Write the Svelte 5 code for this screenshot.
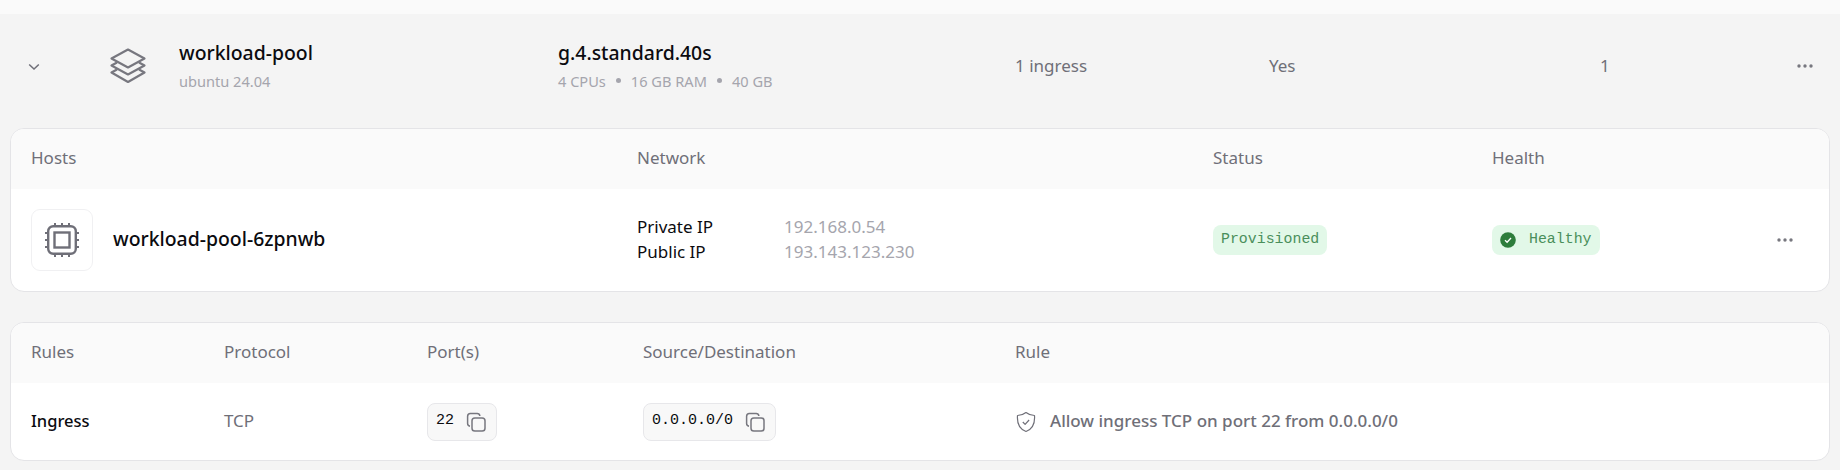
<script>
  const hosts = [
    { name: 'workload-pool-6zpnwb', privateIp: '192.168.0.54', publicIp: '193.143.123.230', status: 'Provisioned', health: 'Healthy' }
  ];
  const rules = [
    { type: 'Ingress', protocol: 'TCP', port: '22', source: '0.0.0.0/0', text: 'Allow ingress TCP on port 22 from 0.0.0.0/0' }
  ];
</script>

{#snippet dots()}
  <svg class="dots" width="16" height="4" viewBox="0 0 16 4"><circle cx="2" cy="2" r="1.7" /><circle cx="8" cy="2" r="1.7" /><circle cx="14" cy="2" r="1.7" /></svg>
{/snippet}

{#snippet copyIcon()}
  <svg class="copy" width="20" height="20" viewBox="0 0 20 20" fill="none" stroke="#77777f" stroke-width="1.5">
    <path d="M4 14.2C2.6 14 1.6 13 1.6 11.5V4.4C1.6 2.8 2.8 1.6 4.4 1.6h6.8c1.4 0 2.5 1 2.7 2.4" />
    <rect x="6" y="6" width="13" height="13" rx="2.8" />
  </svg>
{/snippet}

<div class="page">
  <div class="strip"></div>
  <div class="panel">
    <div class="pool">
      <svg class="chevron" width="12" height="8" viewBox="0 0 12 8" fill="none" stroke="#6f6f78" stroke-width="1.5"><path d="M1.2 1.5 6 6l4.8-4.5" /></svg>
      <svg class="stack" width="36" height="36" viewBox="0 0 36 36" fill="none" stroke="#77777f" stroke-width="2.2" stroke-linejoin="round">
        <path d="M18 1.5 34.500 10.500 18 19.500 1.500 10.500Z" />
        <path d="M7 14.500 1.500 17.500 18 26.500 34.500 17.500 29 14.500" />
        <path d="M7 21.500 1.500 24.500 18 34 34.500 24.500 29 21.500" />
      </svg>
      <div class="stacked">
        <div class="title">workload-pool</div>
        <div class="sub">ubuntu 24.04</div>
      </div>
      <div class="stacked">
        <div class="title">g.4.standard.40s</div>
        <div class="sub specs"><span>4 CPUs</span><i></i><span>16 GB RAM</span><i></i><span>40 GB</span></div>
      </div>
      <div class="cell">1 ingress</div>
      <div class="cell">Yes</div>
      <div class="cell">1</div>
      {@render dots()}
    </div>

    <div class="card">
      <div class="head hosts-grid">
        <span>Hosts</span><span>Network</span><span>Status</span><span>Health</span>
      </div>
      {#each hosts as host}
        <div class="host hosts-grid">
          <div class="host-name">
            <div class="chip">
              <svg width="34" height="34" viewBox="0 0 34 34" fill="none" stroke="#6f6f78">
                <rect x="3.2" y="3.2" width="27.6" height="27.6" rx="5" stroke-width="2.4" />
                <rect x="9.5" y="9.5" width="15" height="15" stroke-width="2.4" />
                <path stroke-width="2" d="M10 0v3M17 0v3M24 0v3M10 31v3M17 31v3M24 31v3M0 10h3M0 17h3M0 24h3M31 10h3M31 17h3M31 24h3" />
              </svg>
            </div>
            <span class="host-label">{host.name}</span>
          </div>
          <div class="ips">
            <span class="ip-label">Private IP</span><span class="ip">{host.privateIp}</span>
            <span class="ip-label">Public IP</span><span class="ip">{host.publicIp}</span>
          </div>
          <div><span class="badge"><span class="lift">{host.status}</span></span></div>
          <div class="health-cell">
            <span class="badge">
              <svg width="16" height="16" viewBox="0 0 16 16"><circle cx="8" cy="8" r="7.8" fill="#2e7d3c" /><path d="M5 8.200l2.100 2.100L11 6" fill="none" stroke="#fff" stroke-width="1.3" /></svg>
              <span class="lift">{host.health}</span>
            </span>
            {@render dots()}
          </div>
        </div>
      {/each}
    </div>

    <div class="card rules-card">
      <div class="head rules-grid">
        <span>Rules</span><span>Protocol</span><span>Port(s)</span><span>Source/Destination</span><span>Rule</span>
      </div>
      {#each rules as rule}
        <div class="rule rules-grid">
          <span class="rule-type lift">{rule.type}</span>
          <span class="muted lift">{rule.protocol}</span>
          <div><span class="code"><span class="code-text">{rule.port}</span>{@render copyIcon()}</span></div>
          <div><span class="code"><span class="code-text">{rule.source}</span>{@render copyIcon()}</span></div>
          <div class="rule-text">
            <svg width="22" height="22" viewBox="0 0 22 22" fill="none" stroke="#6f6f78" stroke-width="1.2" stroke-linejoin="round">
              <path d="M11 1.500C13.500 3.500 16.500 4.500 19.500 4.500c.5 6.500-.5 13-8.500 16C3 17.500 2 11 2.500 4.500 5.500 4.500 8.500 3.500 11 1.500Z" />
              <path d="M7.800 11l2.300 2.300 4-4.300" />
            </svg>
            <span class="lift">{rule.text}</span>
          </div>
        </div>
      {/each}
    </div>
  </div>
</div>

<style>
:global(body) {
  margin: 0;
  background: #f4f4f4;
}
.page {
  width: 1840px;
  height: 470px;
  overflow: hidden;
  font-family: "Noto Sans", sans-serif;
  font-size: 17px;
  color: #0b0b0f;
}
.strip {
  height: 14px;
  background: #fafafa;
}
.panel {
  background: #f4f4f4;
  padding: 0 10px;
}
.pool {
  display: grid;
  grid-template-columns: 82px 69px 379px 457px 254px 331px 1fr auto;
  align-items: center;
  box-sizing: border-box;
  height: 114px;
  margin: 0 -10px;
  padding: 0 27px 11px 28px;
}
.pool .cell {
  color: #6f6f78;
  margin-top: -1px;
}
.chevron {
  margin-top: 3px;
}
.stack {
  margin-top: 1px;
}
.stacked {
  display: flex;
  flex-direction: column;
  gap: 6px;
}
.title {
  font-size: 19.4px;
  font-weight: 500;
  line-height: 24px;
}
.sub {
  font-size: 14.6px;
  line-height: 20px;
  color: #a5a5ad;
}
.specs {
  display: flex;
  align-items: center;
  gap: 10px;
}
.specs i {
  width: 5px;
  height: 5px;
  border-radius: 50%;
  background: #a5a5ad;
}
.dots {
  fill: #77777f;
}
.card {
  background: #fff;
  border: 1px solid #e4e4e7;
  border-radius: 14px;
  overflow: hidden;
}
.rules-card {
  margin-top: 30px;
}
.head {
  box-sizing: border-box;
  background: #fafafa;
  height: 60px;
  padding-bottom: 3px;
  color: #6f6f78;
}
.hosts-grid {
  display: grid;
  grid-template-columns: 606px 576px 279px 1fr;
  padding-left: 20px;
  padding-right: 36px;
  align-items: center;
}
.rules-grid {
  display: grid;
  grid-template-columns: 193px 203px 216px 372px 1fr;
  padding-left: 20px;
  padding-right: 20px;
  align-items: center;
}
.host {
  height: 102px;
}
.host-name {
  display: flex;
  align-items: center;
  gap: 20px;
  font-size: 19.4px;
  font-weight: 500;
}
.host-label {
  margin-top: -4px;
}
.lift {
  margin-top: -2px;
}
.chip {
  width: 60px;
  height: 60px;
  border: 1px solid #f0f0f2;
  border-radius: 9px;
  display: flex;
  align-items: center;
  justify-content: center;
}
.ips {
  display: grid;
  grid-template-columns: 147px 1fr;
  row-gap: 1px;
  line-height: 24px;
  margin-top: -2px;
}
.ip {
  color: #a5a5ad;
}
.badge {
  display: inline-flex;
  align-items: center;
  gap: 13px;
  height: 30px;
  padding: 0 8px;
  border-radius: 8px;
  background: #e2f8e8;
  color: #4a8f5b;
  font-family: "Liberation Mono", monospace;
  font-size: 14.9px;
}
.health-cell {
  display: flex;
  align-items: center;
  justify-content: space-between;
}
.rule {
  height: 77px;
}
.rule-type {
  font-weight: 500;
  font-size: 16.5px;
}
.muted {
  color: #6f6f78;
}
.code {
  display: inline-flex;
  align-items: center;
  gap: 12px;
  height: 36px;
  padding: 0 10px 0 8px;
  background: #f8f8f8;
  border: 1px solid #e7e7ea;
  border-radius: 8px;
  font-family: "Liberation Mono", monospace;
  font-size: 15px;
}
.code-text {
  margin-top: -3px;
}
.rule-text {
  display: flex;
  align-items: center;
  gap: 13px;
  color: #6f6f78;
  font-weight: 500;
}
</style>
